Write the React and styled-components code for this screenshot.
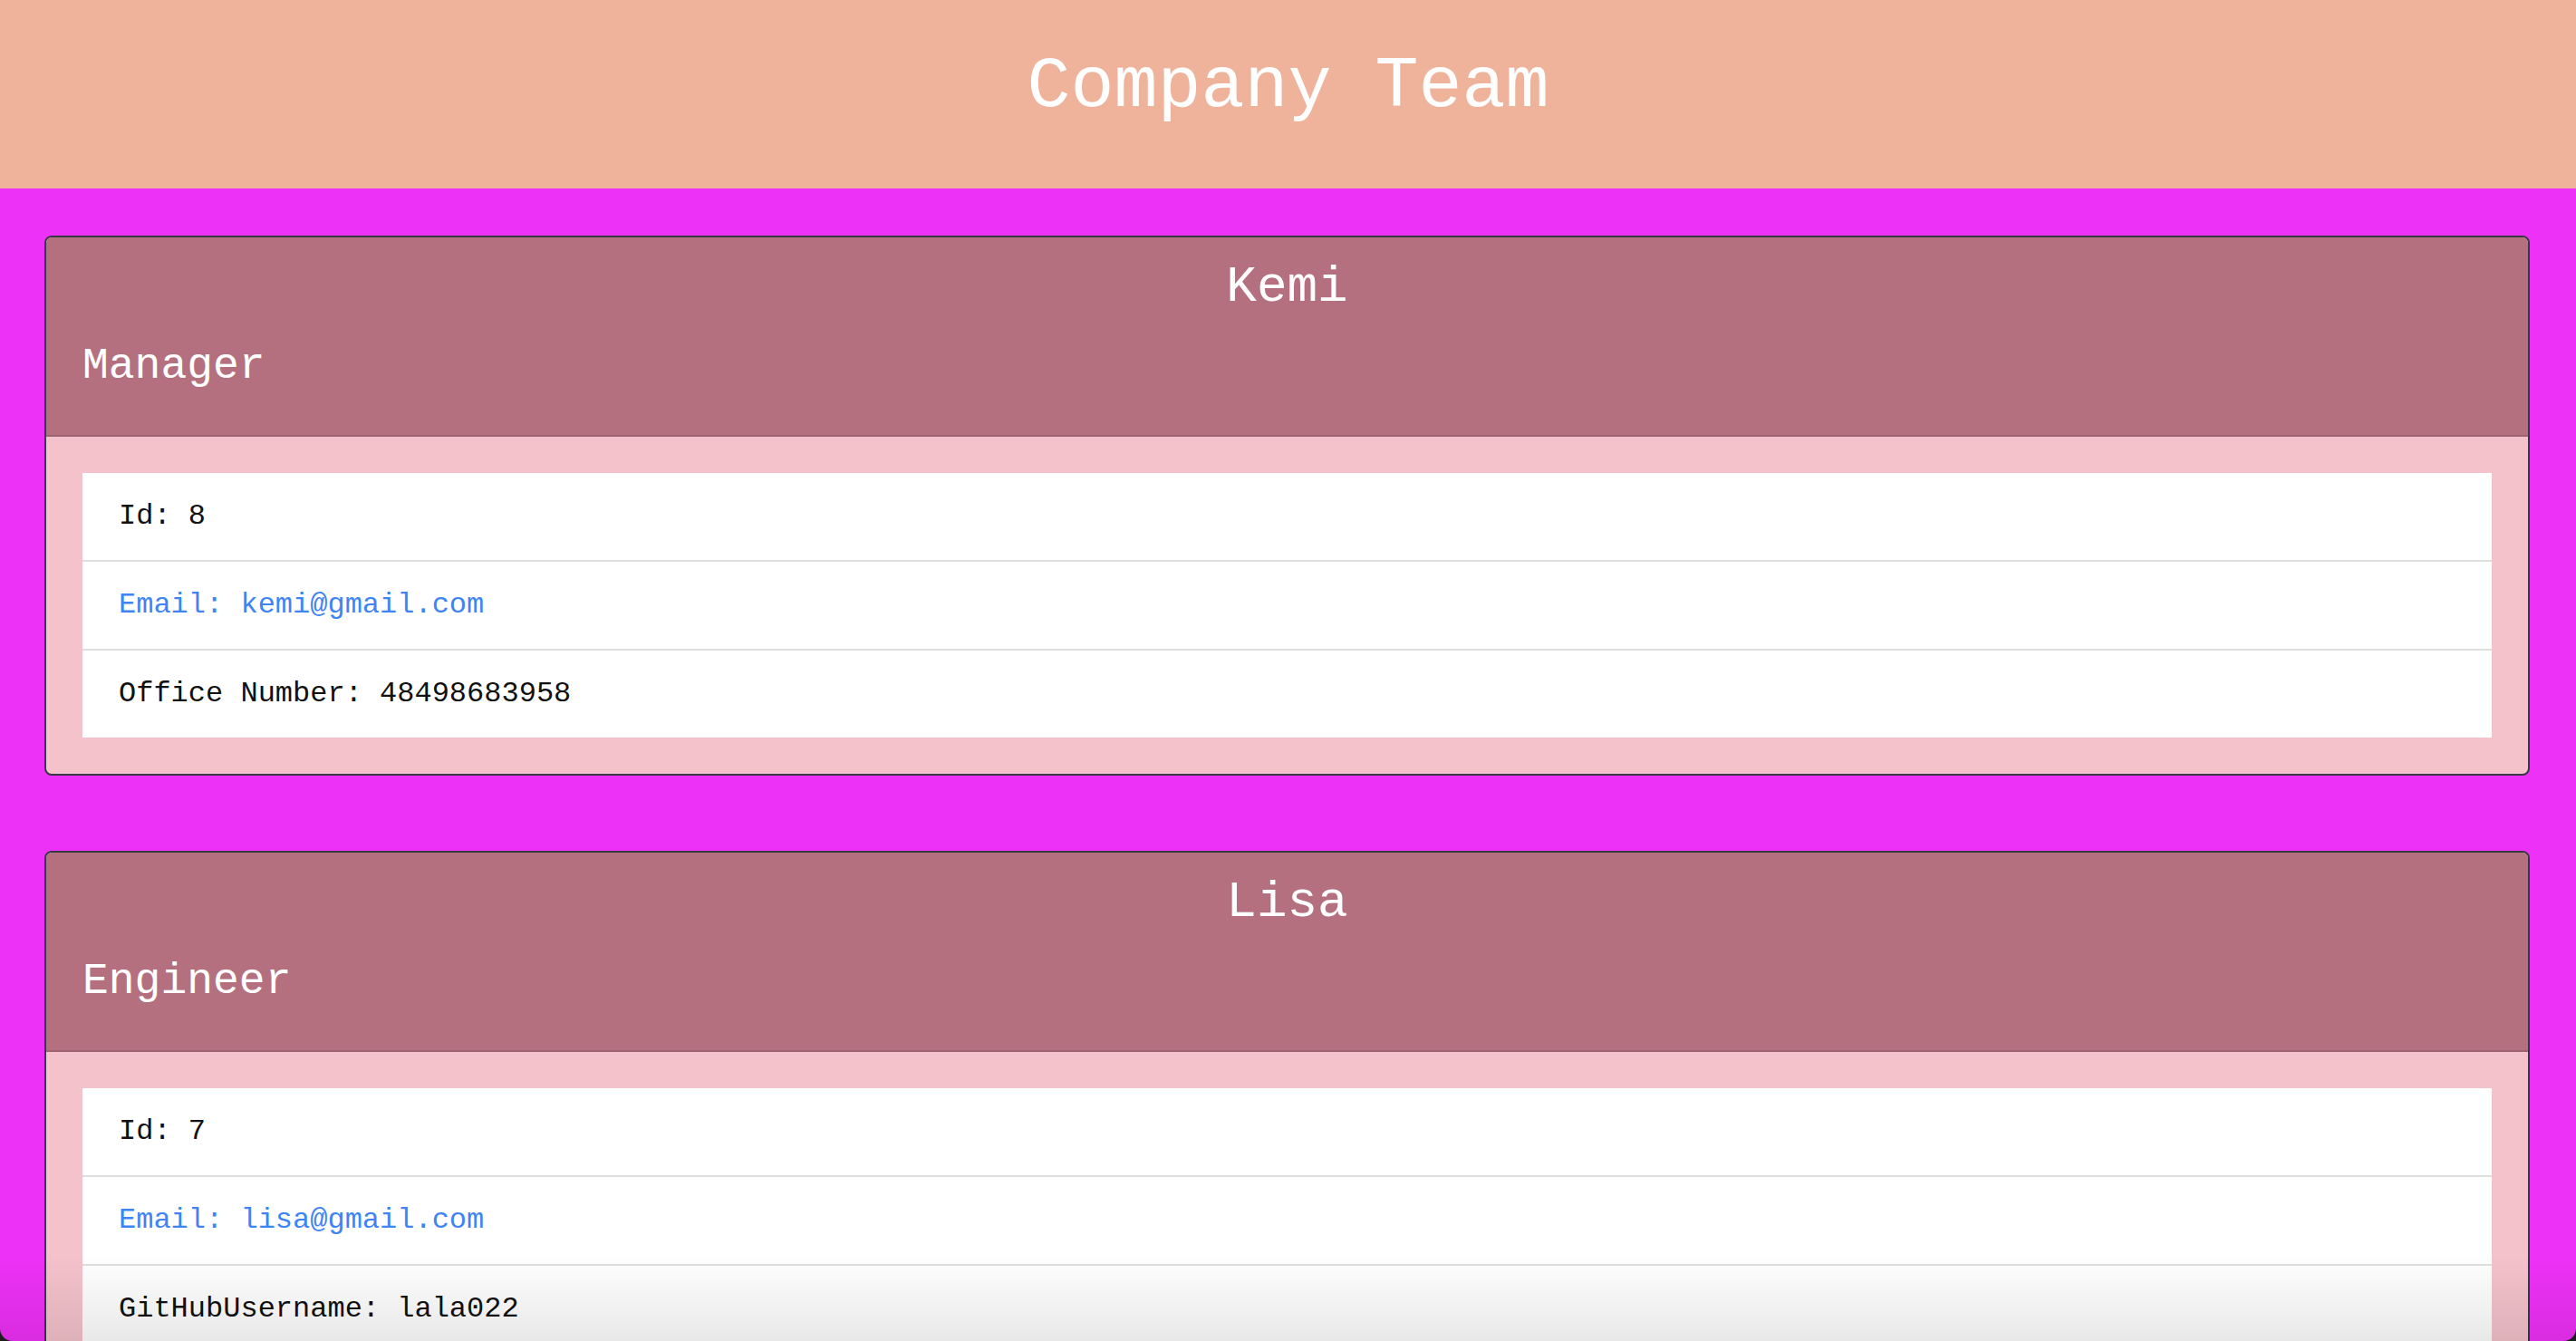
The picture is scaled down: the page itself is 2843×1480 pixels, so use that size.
import React from "react";
import styled, { createGlobalStyle } from "styled-components";

const GlobalStyle = createGlobalStyle`
  html, body {
    margin: 0;
    padding: 0;
    background: #1f1f1f;
    overflow: hidden;
  }
  body {
    font-family: "Liberation Mono", "Courier New", monospace;
  }
`;

const Page = styled.div`
  height: 100vh;
  overflow: hidden;
  background: #ee31f7;
  border-bottom-left-radius: 14px;
  border-bottom-right-radius: 14px;
  position: relative;
`;

const Jumbotron = styled.header`
  background: #efb39b;
  padding: 48px 0;
  text-align: center;
`;

const Title = styled.h1`
  margin: 0 0 16px;
  font-size: 80px;
  font-weight: 400;
  line-height: 1.2;
  color: #ffffff;
`;

const Main = styled.main`
  display: flex;
  flex-direction: column;
  gap: 83px;
  padding: 52px 51px 0 49px;
`;

const Card = styled.section`
  border: 2px solid #343a40;
  border-radius: 8px;
  background: #f4c2cb;
  overflow: hidden;
`;

const CardHeader = styled.div`
  background: #b57080;
  padding: 22px 40px 46px;
  border-bottom: 2px solid rgba(0, 0, 0, 0.125);
  color: #ffffff;
`;

const Name = styled.h3`
  margin: 0 0 25px;
  font-size: 56px;
  font-weight: 400;
  line-height: 1.2;
  text-align: center;
`;

const Role = styled.h4`
  margin: 0;
  font-size: 48px;
  font-weight: 400;
  line-height: 1.2;
`;

const CardBody = styled.div`
  padding: 40px;
`;

const List = styled.ul`
  list-style: none;
  margin: 0;
  padding: 0;
  background: #ffffff;
`;

const Item = styled.li`
  padding: 24px 40px;
  font-size: 32px;
  line-height: 48px;
  color: ${(p) => (p.$link ? "#3f84f5" : "#111111")};
  & + & {
    border-top: 2px solid #dfdfdf;
  }
`;

const BottomShade = styled.div`
  position: absolute;
  left: 0;
  right: 0;
  bottom: 0;
  height: 96px;
  pointer-events: none;
  background: linear-gradient(to bottom, rgba(0, 0, 0, 0), rgba(0, 0, 0, 0.09));
`;

const team = [
  {
    name: "Kemi",
    role: "Manager",
    id: 8,
    email: "kemi@gmail.com",
    extra: "Office Number: 48498683958",
  },
  {
    name: "Lisa",
    role: "Engineer",
    id: 7,
    email: "lisa@gmail.com",
    extra: "GitHubUsername: lala022",
  },
];

function MemberCard({ m }) {
  return (
    <Card>
      <CardHeader>
        <Name>{m.name}</Name>
        <Role>{m.role}</Role>
      </CardHeader>
      <CardBody>
        <List>
          <Item>Id: {m.id}</Item>
          <Item $link>Email: {m.email}</Item>
          <Item>{m.extra}</Item>
        </List>
      </CardBody>
    </Card>
  );
}

export default function App() {
  return (
    <>
      <GlobalStyle />
      <Page>
        <Jumbotron>
          <Title>Company Team</Title>
        </Jumbotron>
        <Main>
          {team.map((m) => (
            <MemberCard key={m.name} m={m} />
          ))}
        </Main>
        <BottomShade />
      </Page>
    </>
  );
}
